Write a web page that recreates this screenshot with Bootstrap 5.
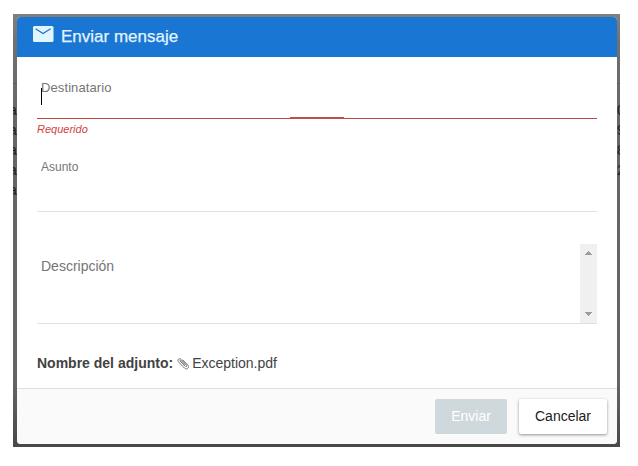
<!DOCTYPE html>
<html lang="es">
<head>
<meta charset="utf-8">
<meta name="viewport" content="width=device-width, initial-scale=1">
<title>Enviar mensaje</title>
<link href="https://cdn.jsdelivr.net/npm/bootstrap@5.3.0/dist/css/bootstrap.min.css" rel="stylesheet">
<style>
body { font-family: "Liberation Sans", Arial, sans-serif; font-size: 14px; line-height: 20px; color: #424242; background: #fff; }
.backdrop-area { width: 607px; height: 433px; margin: 14px 0 0 13px; padding: 3px 3px 3px 4px; background: linear-gradient(#808080 0, #707070 30px, #666 110px, #646464 370px, #484848 433px); }
.page-edge { top: 69px; width: 4px; border-top: 1px solid #5c5c5c; color: #1c1c1c; padding-top: 16px; }
.page-edge span { display: block; height: 20px; line-height: 20px; width: 12px; }
.page-edge-start { left: 0; }
.page-edge-start span { margin-left: -4px; }
.page-edge-end { right: 0; width: 3px; }
.dialog-box { height: 427px; border: 0; border-radius: 4px; overflow: hidden; background: #fff; color: #424242; }
.dialog-box .modal-header { height: 40px; padding: 0 16px; border: 0; border-radius: 0; background: #1976d2; color: #e1f5fe; }
.dialog-box .modal-header svg { margin: 0 0 7px -1px; }
.dialog-box .modal-title { font-size: 17px; line-height: 20px; font-weight: 400; margin-left: 7px; -webkit-text-stroke: .25px #e1f5fe; }
.dialog-box .modal-body { padding: 0 20px; }
.field-box { border-bottom: 1px solid #e0e0e0; padding-left: 4px; color: #757575; }
.field-to { height: 62px; padding-top: 21px; border-color: #c0453e; font-size: 13px; letter-spacing: .1px; }
.field-to::after { content: ""; position: absolute; left: 253px; bottom: -1px; width: 54px; height: 2px; background: #b9504b; }
.caret-line { left: 4px; top: 31px; width: 1px; height: 17px; background: #000; }
.error-text { height: 20px; font-size: 11px; font-style: italic; color: #d0413e; }
.field-subject { height: 73px; padding-top: 18px; font-size: 12px; }
.field-text { height: 80px; margin-top: 32px; padding-top: 0; }
.scroll-track { width: 17px; background: #f0f0f0; padding: 7px 0 7px; }
.scroll-track svg { display: block; }
.attach-row { margin-top: 29px; }
.attach-row svg { margin: 0 3px 0 4px; }
.dialog-box .modal-footer { height: 56px; padding: 0 10px; gap: 12px; background: #fafafa; border-top: 1px solid #e0e0e0; border-radius: 0; }
.dialog-box .modal-footer .btn { height: 35px; margin: 0; padding: 0; font-size: 14px; line-height: 33px; border: 0; border-radius: 2px; }
.btn-send { width: 72px; background: #cfd8dc !important; color: #fff !important; opacity: 1 !important; }
.btn-cancel { width: 88px; background: #fff; color: #212121; box-shadow: 0 1px 3px rgba(0,0,0,.42); }
</style>
<script src="https://cdn.jsdelivr.net/npm/bootstrap@5.3.0/dist/js/bootstrap.bundle.min.js"></script>
</head>
<body class="overflow-hidden">
<div class="backdrop-area position-relative overflow-hidden">
  <div class="page-edge page-edge-start position-absolute overflow-hidden" aria-hidden="true"><span>a</span><span>a</span><span>a</span><span>a</span><span>a</span></div>
  <div class="page-edge page-edge-end position-absolute overflow-hidden" aria-hidden="true"><span>0</span><span>9</span><span>8</span><span>2</span></div>
  <div class="dialog-box modal-content position-relative" role="dialog" aria-labelledby="titulo">
    <div class="modal-header justify-content-start">
      <svg width="22" height="18" viewBox="0 0 22 18" aria-hidden="true"><rect x="1" y="1" width="20.5" height="16" rx="1.6" fill="#e1f5fe"/><path d="M3.6 3.8 11 8.6 18.6 3.8" fill="none" stroke="#1976d2" stroke-width="1.3"/></svg>
      <h1 class="modal-title" id="titulo">Enviar mensaje</h1>
    </div>
    <div class="modal-body">
      <div class="field-box field-to position-relative">Destinatario<span class="caret-line position-absolute"></span></div>
      <div class="error-text">Requerido</div>
      <div class="field-box field-subject">Asunto</div>
      <div class="field-box field-text d-flex justify-content-between">
        <span class="pt-2 mt-1">Descripción</span>
        <div class="scroll-track d-flex flex-column justify-content-between align-items-center">
          <svg width="7" height="4" viewBox="0 0 7 4" shape-rendering="crispEdges"><path d="M3 0h1v1h1v1h1v1h1v1H0V3h1V2h1V1h1Z" fill="#9c9c9c"/></svg>
          <svg width="7" height="4" viewBox="0 0 7 4" shape-rendering="crispEdges"><path d="M0 0h7v1H6v1H5v1H4v1H3V3H2V2H1V1H0Z" fill="#9c9c9c"/></svg>
        </div>
      </div>
      <div class="attach-row d-flex align-items-center">
        <strong>Nombre del adjunto:</strong>
        <svg width="12" height="13" viewBox="0 0 12 13" fill="none" stroke="#777" stroke-width="1" stroke-linecap="round" aria-hidden="true"><path d="M3.2 4.1 8.1 9.2C9.2 10.3 10.5 9.1 9.5 8L4 2.3C2.3.6-.3 3 1.4 4.8L7.6 11.2C9.8 13.3 12.9 10.3 10.8 8.1L6 3.1M3.2 4.1C2.7 3.5 3.4 2.8 4 3.4L8.1 7.7"/></svg>
        <span>Exception.pdf</span>
      </div>
    </div>
    <div class="modal-footer flex-nowrap">
      <button type="button" class="btn btn-send" disabled>Enviar</button>
      <button type="button" class="btn btn-cancel">Cancelar</button>
    </div>
  </div>
</div>
</body>
</html>
